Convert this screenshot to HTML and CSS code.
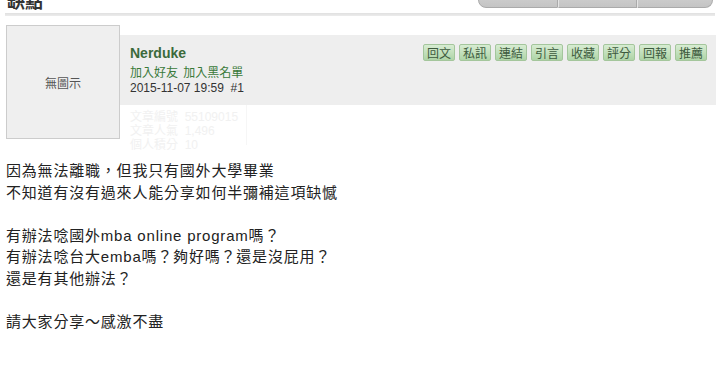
FILE: index.html
```html
<!DOCTYPE html>
<html lang="zh-Hant">
<head>
    <meta charset="UTF-8">
    <meta name="viewport" content="width=device-width, initial-scale=1.0">
    <title>缺點</title>
    <link rel="stylesheet" href="styles.css">
</head>
<body>
    <div class="thread-head">
        <h2 class="thread-title">缺點</h2>
        <div class="tabs">
            <span class="tab tab-a"></span>
            <span class="tab tab-b"></span>
            <span class="tab tab-c"></span>
        </div>
    </div>
    <div class="rule"></div>

    <div class="post">
        <div class="avatar">無圖示</div>
        <div class="post-main">
            <div class="post-head">
                <div class="author">
                    <div class="author-name">Nerduke</div>
                    <div class="author-links">
                        <a href="#">加入好友</a>
                        <a href="#">加入黑名單</a>
                    </div>
                    <div class="post-date">2015-11-07 19:59 &nbsp;#1</div>
                </div>
                <div class="actions">
                    <button>回文</button>
                    <button>私訊</button>
                    <button>連結</button>
                    <button>引言</button>
                    <button>收藏</button>
                    <button>評分</button>
                    <button>回報</button>
                    <button>推薦</button>
                </div>
            </div>
            <div class="stats">
                <div>文章編號 &nbsp;55109015</div>
                <div>文章人氣 &nbsp;1,496</div>
                <div>個人積分 &nbsp;10</div>
            </div>
        </div>
    </div>

    <div class="message">
        <p>因為無法離職，但我只有國外大學畢業<br>不知道有沒有過來人能分享如何半彌補這項缺憾</p>
        <p>有辦法唸國外mba online program嗎？<br>有辦法唸台大emba嗎？夠好嗎？還是沒屁用？<br>還是有其他辦法？</p>
        <p>請大家分享～感激不盡</p>
    </div>
</body>
</html>
```

FILE: styles.css
```css
body {
    margin: 0;
    padding: 0;
    background-color: #ffffff;
    color: #222222;
    font-family: Arial, "Liberation Sans", "Noto Sans CJK TC", sans-serif;
}

.thread-head {
    display: flex;
    justify-content: space-between;
    align-items: flex-start;
    height: 13px;
    overflow: hidden;
}

.thread-title {
    margin: -9px 0 0 7px;
    font-size: 18px;
    line-height: 22px;
    font-weight: bold;
    color: #333333;
}

.tabs {
    display: flex;
    margin: -13px 7px 0 0;
}

.tab {
    display: block;
    height: 19px;
    background: linear-gradient(#d6d6d6, #c4c4c4);
    border: 1px solid #aaaaaa;
    border-left: 1px solid #e4e4e4;
}

.tab-a {
    width: 78px;
    border-left: 1px solid #aaaaaa;
    border-radius: 0 0 0 8px;
}

.tab-b {
    width: 77px;
}

.tab-c {
    width: 74px;
    border-radius: 0 0 8px 0;
}

.rule {
    height: 3px;
    margin: 0 5px;
    background: linear-gradient(#e0e0e0, #ececec);
}

.post {
    display: flex;
    padding: 9px 4px 0 6px;
}

.avatar {
    width: 112px;
    height: 112px;
    flex: none;
    display: flex;
    align-items: center;
    justify-content: center;
    background: #efefef;
    border: 1px solid #cccccc;
    font-size: 12px;
    color: #555555;
}

.post-main {
    flex: 1;
    margin-top: 10px;
}

.post-head {
    display: flex;
    justify-content: space-between;
    align-items: flex-start;
    height: 70px;
    box-sizing: border-box;
    padding: 9px 9px 0 10px;
    background: #eeeeee;
}

.author-name {
    font-size: 14px;
    line-height: 18px;
    font-weight: bold;
    color: #3b6a3b;
}

.author-links {
    font-size: 12px;
    line-height: 15px;
    margin-top: 4px;
}

.author-links a {
    color: #3a7a3a;
    text-decoration: none;
    margin-right: 2px;
}

.post-date {
    font-size: 12px;
    line-height: 14px;
    color: #333333;
}

.actions {
    display: flex;
    gap: 4px;
}

.actions button {
    height: 17px;
    padding: 0 3px;
    border: 1px solid #a4c69c;
    border-radius: 2px;
    background: linear-gradient(#d7ecd2, #aed4a7);
    color: #3d5a3d;
    font-family: "Noto Sans CJK TC", sans-serif;
    font-size: 12px;
    line-height: 15px;
    cursor: pointer;
}

.stats {
    width: 125px;
    margin-left: 2px;
    padding: 5px 0 0 8px;
    height: 40px;
    box-sizing: border-box;
    border-right: 1px solid #f6f6f6;
    font-size: 12px;
    line-height: 14px;
    color: #f1f1f1;
}

.message {
    padding: 0 6px;
    margin-top: 15px;
    font-size: 15px;
    line-height: 21.5px;
    letter-spacing: 0.8px;
    color: #222222;
}

.message p {
    margin: 0 0 21.5px 0;
}
```
